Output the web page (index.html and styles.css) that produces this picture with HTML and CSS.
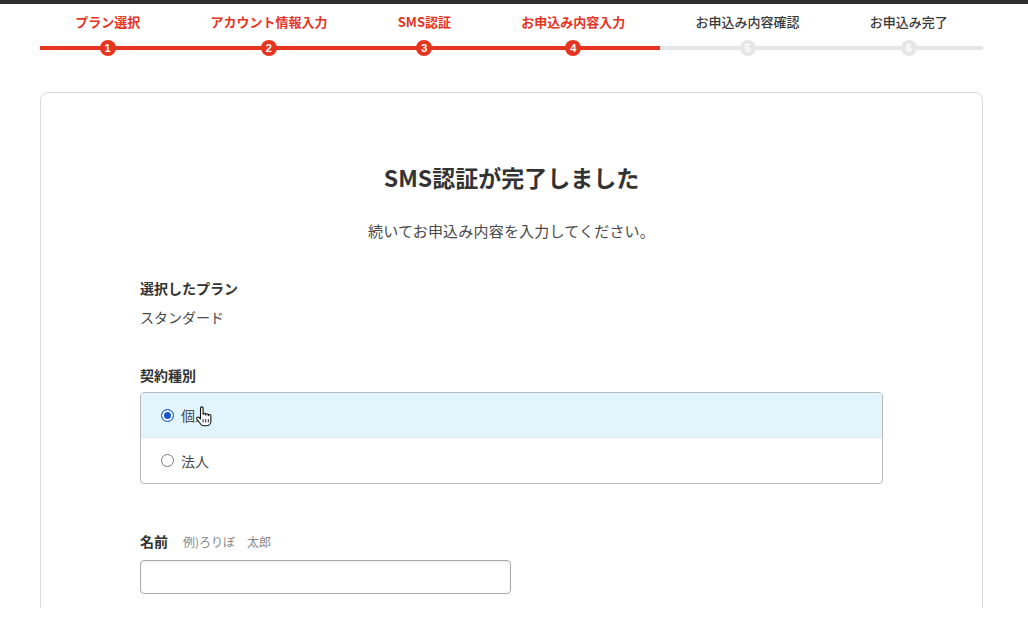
FILE: index.html
```html
<!DOCTYPE html>
<html lang="ja">
<head>
<meta charset="utf-8">
<title>お申込み内容入力</title>
<link rel="stylesheet" href="styles.css">
</head>
<body>
<div class="topbar"></div>
<div class="page">
  <ol class="steps">
    <li class="step done"><span class="step-label">プラン選択</span><span class="track"><span class="num">1</span></span></li>
    <li class="step done"><span class="step-label">アカウント情報入力</span><span class="track"><span class="num">2</span></span></li>
    <li class="step done"><span class="step-label">SMS認証</span><span class="track"><span class="num">3</span></span></li>
    <li class="step done"><span class="step-label">お申込み内容入力</span><span class="track"><span class="num">4</span></span></li>
    <li class="step"><span class="step-label">お申込み内容確認</span><span class="track"><span class="num">5</span></span></li>
    <li class="step"><span class="step-label">お申込み完了</span><span class="track"><span class="num">6</span></span></li>
  </ol>

  <section class="card">
    <h1 class="title">SMS認証が完了しました</h1>
    <p class="lead">続いてお申込み内容を入力してください。</p>

    <div class="field">
      <div class="label">選択したプラン</div>
      <div class="value">スタンダード</div>
    </div>

    <div class="field">
      <div class="label">契約種別</div>
      <div class="radio-group">
        <div class="radio-row selected">
          <span class="radio checked"></span><span class="radio-text">個人</span>
          <svg class="cursor" width="17" height="21" viewBox="0 0 17 21"><path d="M5.5 2.2a1.3 1.3 0 0 1 2.6 0v6.3a1.3 1.3 0 0 1 2.6 0v.6a1.3 1.3 0 0 1 2.6 0v.7a1.3 1.3 0 0 1 2.6 0V15c0 2.7-1.9 4.8-4.5 4.8H9c-1.5 0-2.6-.6-3.4-1.8L1.8 13a1.3 1.3 0 0 1 2-1.6l1.7 1.5Z" fill="#fff" stroke="#111" stroke-width="1.1" stroke-linejoin="round"/><path d="M8.1 13v3.5M10.7 13v3.5M13.3 13v3.5" stroke="#111" stroke-width="0.9"/></svg>
        </div>
        <div class="radio-row">
          <span class="radio"></span><span class="radio-text">法人</span>
        </div>
      </div>
    </div>

    <div class="field name-field">
      <div class="label">名前<span class="hint">例)ろりぼ　太郎</span></div>
      <input class="text-input" type="text">
    </div>
  </section>
</div>
</body>
</html>
```

FILE: styles.css
```css
* { box-sizing: border-box; }

html, body {
  margin: 0;
  padding: 0;
  background: #fff;
  font-family: "Noto Sans CJK JP", "Noto Sans", sans-serif;
  color: #333;
}

.topbar {
  height: 4px;
  background: #2e2e2e;
}

.page {
  height: 604px;
  overflow: hidden;
  padding: 0 45px 0 40px;
}

.steps {
  list-style: none;
  margin: 0;
  padding: 9px 0 0;
  display: flex;
}

.step {
  flex: 1 1 auto;
  display: flex;
  flex-direction: column;
  align-items: center;
}

.step-label {
  font-size: 13px;
  line-height: 18px;
  font-weight: 500;
  color: #3a3a3a;
  white-space: nowrap;
  margin-bottom: 8px;
}

.step.done .step-label { color: #e5341f; font-weight: 700; }

.track {
  position: relative;
  width: 100%;
  height: 18px;
  display: flex;
  justify-content: center;
  align-items: center;
}

.track::before {
  content: "";
  position: absolute;
  left: 0;
  right: 0;
  top: 7px;
  height: 4px;
  background: #e6e6e6;
}

.step.done .track::before { background: #e5341f; }

.num {
  position: relative;
  flex: 0 0 auto;
  width: 16px;
  height: 16px;
  border-radius: 50%;
  background: #e6e6e6;
  color: #fff;
  font-family: "Liberation Sans", Arial, sans-serif;
  font-size: 11px;
  font-weight: 700;
  line-height: 16px;
  text-align: center;
}

.step.done .num { background: #e5341f; }

.card {
  margin-top: 35px;
  border: 1px solid #dadada;
  border-radius: 8px;
  padding: 68px 99px 80px;
  min-height: 600px;
}

.title {
  margin: 0;
  text-align: center;
  font-size: 23px;
  line-height: 32px;
  font-weight: 700;
  color: #333;
}

.lead {
  margin: 27px 0 0;
  text-align: center;
  font-size: 15px;
  line-height: 22px;
  letter-spacing: 0.2px;
  color: #4a4a4a;
}

.field { margin-top: 35px; }
.field + .field { margin-top: 36px; }
.field.name-field { margin-top: 46px; }

.label {
  font-size: 14px;
  line-height: 22px;
  font-weight: 700;
  color: #333;
}

.hint {
  margin-left: 15px;
  font-size: 12px;
  font-weight: 400;
  color: #888;
}

.value {
  margin-top: 7px;
  font-size: 14px;
  line-height: 22px;
  color: #4a4a4a;
}

.radio-group {
  margin-top: 6px;
  border: 1px solid #b9b9b9;
  border-radius: 4px;
  overflow: hidden;
}

.radio-row {
  position: relative;
  height: 45px;
  display: flex;
  align-items: center;
  padding-left: 20px;
  font-size: 14px;
  color: #4a4a4a;
}

.radio-row.selected {
  background: #e3f5fc;
  border-bottom: 1px solid #dcedf3;
}

.radio {
  width: 13px;
  height: 13px;
  border-radius: 50%;
  border: 1px solid #777;
  background: #fff;
  margin-right: 7px;
}

.radio.checked {
  border: 1.5px solid #1a57c9;
  box-shadow: inset 0 0 0 2px #fff;
  background: #1a57c9;
}

.cursor {
  position: absolute;
  left: 54px;
  top: 13px;
}

.text-input {
  display: block;
  margin-top: 7px;
  width: 371px;
  height: 34px;
  border: 1px solid #aaa;
  border-radius: 4px;
  box-shadow: inset 0 1px 2px rgba(0,0,0,0.08);
  font-size: 14px;
  padding: 0 10px;
}
```
